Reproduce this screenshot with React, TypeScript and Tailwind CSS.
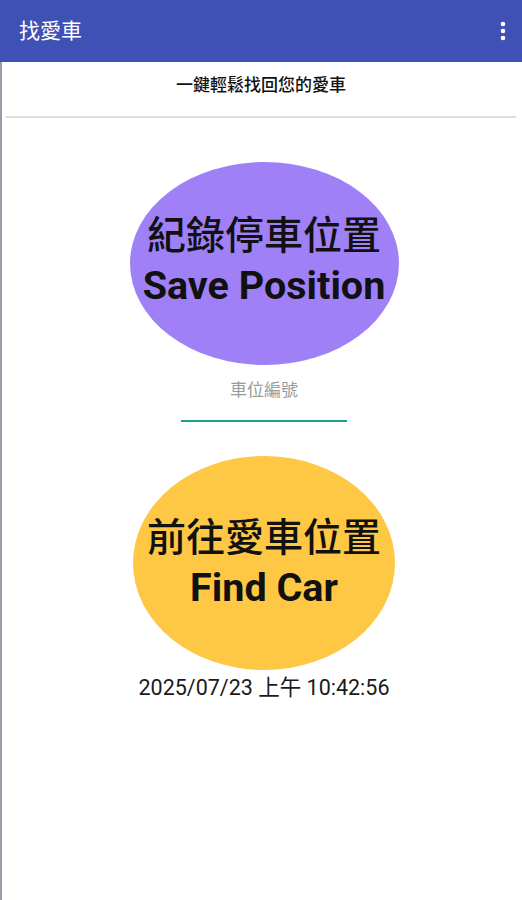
import React from "react";

export default function App() {
  const font = { fontFamily: 'Roboto, "Noto Sans CJK TC", sans-serif' };
  return (
    <div className="w-[522px] h-[900px] bg-white flex flex-col overflow-hidden" style={font}>
      <div className="h-[62px] bg-[#3F51B5] flex items-center justify-between pl-[19px] pr-[16px] shrink-0">
        <span className="text-white text-[21px] leading-none">找愛車</span>
        <svg width="6" height="20" viewBox="0 0 6 20">
          <circle cx="3" cy="3" r="2.3" fill="white" />
          <circle cx="3" cy="10" r="2.3" fill="white" />
          <circle cx="3" cy="17" r="2.3" fill="white" />
        </svg>
      </div>
      <div className="flex-1 border-l-[2px] border-[#9c9ba8] flex flex-col items-center">
        <div className="h-[46px] w-full flex items-center justify-center pt-[2px] text-[17px] font-medium text-[#111] pr-[2px]">
          一鍵輕鬆找回您的愛車
        </div>
        <div className="w-[510px] h-[2px] bg-[#dddddd] ml-[4px] mr-[6px] self-start mt-[8px]"></div>
        <div className="mt-[44px] w-[269px] h-[203px] rounded-[50%] bg-[#9F80F7] flex flex-col items-center justify-center ml-[4px]">
          <div className="text-[39px] leading-[49px] font-medium text-[#111] -mt-[6px]">紀錄停車位置</div>
          <div className="text-[39.5px] leading-[49px] font-bold text-[#111]">Save Position</div>
        </div>
        <div className="mt-[13px] text-[17px] leading-[24px] text-[#9a9a9a] ml-[4px]">車位編號</div>
        <div className="mt-[18px] w-[166px] h-[2px] bg-[#1f9d8f] ml-[3px]"></div>
        <div className="mt-[34px] w-[262px] h-[214px] rounded-[50%] bg-[#FEC844] flex flex-col items-center justify-center ml-[4px]">
          <div className="text-[39px] leading-[49px] font-medium text-[#111]">前往愛車位置</div>
          <div className="text-[39.5px] leading-[49px] font-bold text-[#111]">Find Car</div>
        </div>
        <div className="mt-[4px] text-[21.5px] leading-[28px] text-[#1a1a1a] ml-[4px]">2025/07/23 上午 10:42:56</div>
      </div>
    </div>
  );
}
